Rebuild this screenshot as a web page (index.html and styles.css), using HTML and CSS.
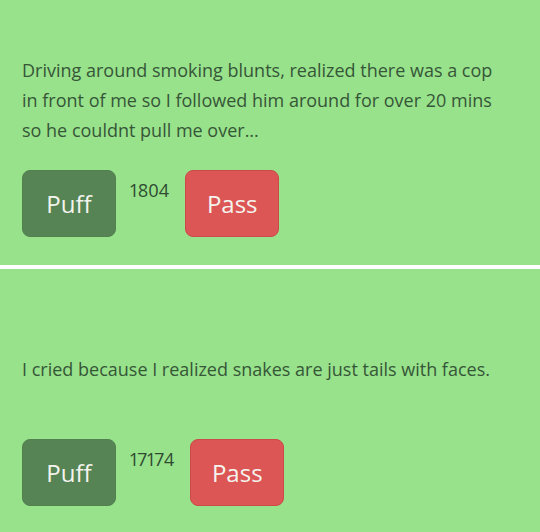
FILE: index.html
```html
<!DOCTYPE html>
<html lang="en">
<head>
    <meta charset="UTF-8">
    <meta name="viewport" content="width=device-width, initial-scale=1.0">
    <title>Puff or Pass</title>
    <link rel="stylesheet" href="styles.css">
</head>
<body>
    <div class="feed">
        <div class="post">
            <div class="post-text">
                <p>Driving around smoking blunts, realized there was a cop in front of me so I followed him around for over 20 mins so he couldnt pull me over...</p>
            </div>
            <div class="actions">
                <button class="btn puff">Puff</button>
                <span class="count">1804</span>
                <button class="btn pass">Pass</button>
            </div>
        </div>

        <div class="post">
            <div class="post-text">
                <p>I cried because I realized snakes are just tails with faces.</p>
            </div>
            <div class="actions">
                <button class="btn puff">Puff</button>
                <span class="count">17174</span>
                <button class="btn pass">Pass</button>
            </div>
        </div>
    </div>
</body>
</html>
```

FILE: styles.css
```css
body {
    margin: 0;
    background-color: #ffffff;
    font-family: "Open Sans", "Noto Sans", sans-serif;
}
.feed {
    display: flex;
    flex-direction: column;
    gap: 4px;
}
.post {
    background-color: #98e28b;
    padding: 40px 40px 28px 22px;
}
.post-text {
    height: 120px;
    display: flex;
    align-items: center;
}
.post-text p {
    margin: 0;
    font-size: 18px;
    line-height: 30px;
    color: #365638;
}
.actions {
    display: flex;
    align-items: flex-start;
    margin-top: 10px;
}
.btn {
    width: 94px;
    height: 67px;
    border-radius: 8px;
    font-family: inherit;
    font-size: 24px;
    color: #f4f4ee;
    cursor: pointer;
}
.puff {
    background-color: #568454;
    border: 1px solid #52804f;
}
.pass {
    background-color: #dc5656;
    border: 1px solid #cc4a4a;
}
.count {
    margin: 8px 16px 0 14px;
    font-size: 18px;
    font-variant-numeric: proportional-nums;
    color: #2f4a31;
}
```
